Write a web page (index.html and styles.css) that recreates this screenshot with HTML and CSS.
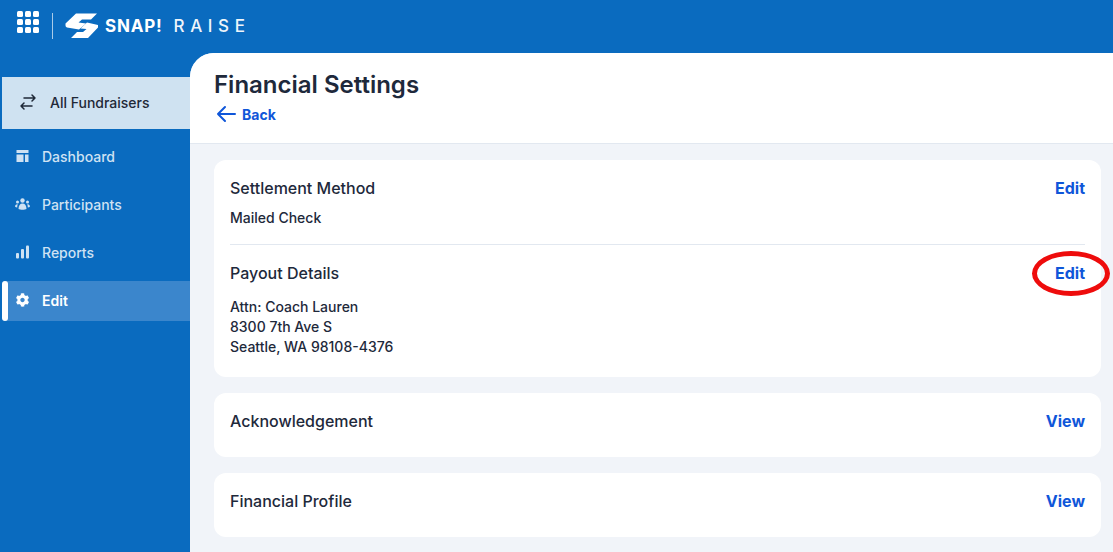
FILE: index.html
```html
<!DOCTYPE html>
<html lang="en">
<head>
<meta charset="utf-8">
<title>Financial Settings</title>
<link rel="stylesheet" href="styles.css">
</head>
<body>
<div class="app">
  <header class="topbar">
    <svg class="grid-icon" width="22" height="22" viewBox="0 0 22 22" fill="#fff">
      <rect x="0" y="0" width="6" height="6" rx="1.500"/><rect x="8" y="0" width="6" height="6" rx="1.500"/><rect x="16" y="0" width="6" height="6" rx="1.500"/>
      <rect x="0" y="8" width="6" height="6" rx="1.500"/><rect x="8" y="8" width="6" height="6" rx="1.500"/><rect x="16" y="8" width="6" height="6" rx="1.500"/>
      <rect x="0" y="16" width="6" height="6" rx="1.500"/><rect x="8" y="16" width="6" height="6" rx="1.500"/><rect x="16" y="16" width="6" height="6" rx="1.500"/>
    </svg>
    <span class="divider"></span>
    <svg class="logo-mark" width="34" height="26" viewBox="0 0 34 26" fill="#fff">
      <path d="M11 .5H32L26 6.500H17L13.500 9.500L21 10.500L14 16.500L2 14.500Q.5 14 .5 12.500V10.500Z"/>
      <path d="M33 12V14.500L23 25H6L12 19H18L21.500 16L15.500 15.500L22 9.500Z"/>
    </svg>
    <span class="brand"><span class="brand-snap">SNAP!</span><span class="brand-raise">RAISE</span></span>
  </header>
  <div class="body">
    <nav class="sidebar">
      <a class="all-link">
        <svg width="18" height="18" viewBox="0 0 18 18" fill="none" stroke="#1f2937" stroke-width="1.500" stroke-linecap="round" stroke-linejoin="round">
          <path d="M5 5H16M13 2L16 5L13 8"/>
          <path d="M13 13H2M5 10L2 13L5 16"/>
        </svg>
        <span>All Fundraisers</span>
      </a>
      <ul class="nav">
        <li class="nav-item">
          <svg width="14" height="14" viewBox="0 0 14 14" fill="#cfe2f3"><path d="M1 1H13V4H1ZM1 5.500H8V13H1ZM9.500 5.500H13V13H9.500Z"/></svg>
          <span>Dashboard</span>
        </li>
        <li class="nav-item">
          <svg width="15" height="14" viewBox="0 0 15 14" fill="#cfe2f3"><circle cx="7.500" cy="3.500" r="2.200"/><circle cx="2.500" cy="5" r="1.500"/><circle cx="12.500" cy="5" r="1.500"/><path d="M3.500 12C3.500 8.500 5 6.500 7.500 6.500S11.500 8.500 11.500 12C10 13 5 13 3.500 12Z"/><path d="M0 9.500C0 8 1 7 2.800 7.200C2.400 8.200 2.200 9.200 2.200 10.500C1.200 10.500 .5 10.200 0 9.500ZM15 9.500C15 8 14 7 12.200 7.200C12.600 8.200 12.800 9.200 12.800 10.500C13.800 10.500 14.500 10.200 15 9.500Z"/></svg>
          <span>Participants</span>
        </li>
        <li class="nav-item">
          <svg width="14" height="14" viewBox="0 0 14 14" fill="#cfe2f3"><rect x="0.500" y="8" width="3" height="5.500" rx="1"/><rect x="5.500" y="4" width="3" height="9.500" rx="1"/><rect x="10.500" y="0.500" width="3" height="13" rx="1"/></svg>
          <span>Reports</span>
        </li>
        <li class="nav-item active">
          <svg width="14" height="14" viewBox="0 0 512 512" fill="#fff"><path d="M487 316l-42-25c4-23 4-47 0-70l42-25c5-3 7-9 5-14-11-35-30-67-54-93-4-4-10-5-15-2l-42 25c-18-15-38-27-60-35V28c0-6-4-11-9-12-36-8-73-8-108 0-6 1-10 6-10 12v49c-22 8-42 20-60 35L92 87c-5-3-11-2-15 2-24 26-43 58-54 93-2 5 0 11 5 14l42 25c-4 23-4 47 0 70l-42 25c-5 3-7 9-5 14 11 35 30 67 54 93 4 4 10 5 15 2l42-25c18 15 38 27 60 35v49c0 6 4 11 10 12 36 8 73 8 108 0 5-1 9-6 9-12v-49c22-8 42-20 60-35l42 25c5 3 11 2 15-2 24-26 43-58 54-93 2-5 0-11-5-14zM256 336c-44 0-80-36-80-80s36-80 80-80 80 36 80 80-36 80-80 80z"/></svg>
          <span>Edit</span>
        </li>
      </ul>
    </nav>
    <main class="main">
      <div class="page-head">
        <h1>Financial Settings</h1>
        <a class="back">
          <svg width="20" height="18" viewBox="0 0 20 18" fill="none" stroke="#0f56d9" stroke-width="2" stroke-linecap="round" stroke-linejoin="round"><path d="M19 9H2M9 2L2 9L9 16"/></svg>
          <span>Back</span>
        </a>
      </div>
      <div class="content">
        <section class="card">
          <div class="row-head">
            <h2>Settlement Method</h2>
            <a class="action">Edit</a>
          </div>
          <p class="detail first">Mailed Check</p>
          <hr class="rule">
          <div class="row-head">
            <h2>Payout Details</h2>
            <a class="action circled">Edit</a>
          </div>
          <p class="detail address">Attn: Coach Lauren<br>8300 7th Ave S<br>Seattle, WA 98108-4376</p>
        </section>
        <section class="card short">
          <div class="row-head"><h2>Acknowledgement</h2><a class="action">View</a></div>
        </section>
        <section class="card short">
          <div class="row-head"><h2>Financial Profile</h2><a class="action">View</a></div>
        </section>
      </div>
    </main>
  </div>
</div>
</body>
</html>
```

FILE: styles.css
```css
*, *::before, *::after { box-sizing: border-box; }
html, body { margin: 0; height: 100%; overflow: hidden; }
body { font-family: Inter, "Liberation Sans", sans-serif; background: #0a6bbf; color: #1e293b; }
.app { height: 552px; display: flex; flex-direction: column; background: #0a6bbf; }
.topbar { height: 53px; flex: none; display: flex; align-items: flex-start; padding: 11px 0 0 17px; }
.grid-icon { display: block; }
.divider { width: 1px; height: 26px; background: #a9cbe8; margin: 2px 12px 0 13px; }
.logo-mark { display: block; margin: 2px 6px 0 0; }
.brand { display: flex; gap: 11px; color: #fff; font-size: 17px; line-height: 30px; height: 26px; }
.brand-snap { font-weight: 700; letter-spacing: .8px; }
.brand-raise { font-weight: 500; letter-spacing: 5.600px; font-size: 17px; color: #eef5fb; }
.body { flex: 1; display: flex; min-height: 0; }
.sidebar { width: 190px; flex: none; padding: 24px 0 0 2px; }
.all-link { display: flex; align-items: center; gap: 13px; height: 52px; padding-left: 17px; padding-bottom: 2px; background: #cfe2f1; color: #1f2937; font-size: 14px; font-weight: 500; }
.nav { list-style: none; margin: 8px 0 0; padding: 0; display: flex; flex-direction: column; gap: 8px; }
.nav-item { position: relative; display: flex; align-items: center; gap: 12px; height: 40px; padding-left: 13px; padding-bottom: 2px; color: #cfe2f3; font-size: 14px; font-weight: 500; }
.nav-item svg { flex: none; width: 15px; }
.nav-item.active { background: #3b86cc; color: #fff; margin-left: 4px; padding-left: 9px; font-weight: 600; }
.nav-item.active::before { content: ""; position: absolute; left: -4px; top: 0; bottom: 0; width: 6px; border-radius: 3px; background: #fff; }
.main { flex: 1; min-width: 0; background: #f1f4f9; border-top-left-radius: 24px; overflow: hidden; }
.page-head { height: 91px; background: #fff; border-bottom: 1px solid #e2e8f0; padding: 16px 24px 0; }
h1 { margin: 0; font-size: 24px; line-height: 32px; font-weight: 600; color: #1e293b; }
.back { display: flex; align-items: center; gap: 6px; height: 20px; margin-top: 3px; margin-left: 2px; color: #0f56d9; font-size: 14px; font-weight: 700; }
.content { padding: 16px 12px 0 24px; display: flex; flex-direction: column; gap: 16px; }
.card { background: #fff; border-radius: 12px; padding: 16px; height: 217px; }
.card.short { height: 64px; }
.row-head { display: flex; justify-content: space-between; align-items: center; height: 24px; }
h2 { margin: 0; font-size: 16px; line-height: 24px; font-weight: 500; color: #1e293b; }
.action { color: #0f56d9; font-size: 16px; font-weight: 700; line-height: 24px; }
.circled { position: relative; }
.circled::after { content: ""; position: absolute; left: -23px; top: -10px; width: 78px; height: 45px; border: 5px solid #ee0c0c; border-radius: 50%; }
.detail { margin: 0; font-size: 14px; line-height: 20px; font-weight: 500; color: #1e293b; }
.detail.first { margin-top: 8px; }
.rule { border: 0; border-top: 1px solid #e2e8f0; margin: 16px 0; }
.detail.address { margin-top: 12px; }
```
